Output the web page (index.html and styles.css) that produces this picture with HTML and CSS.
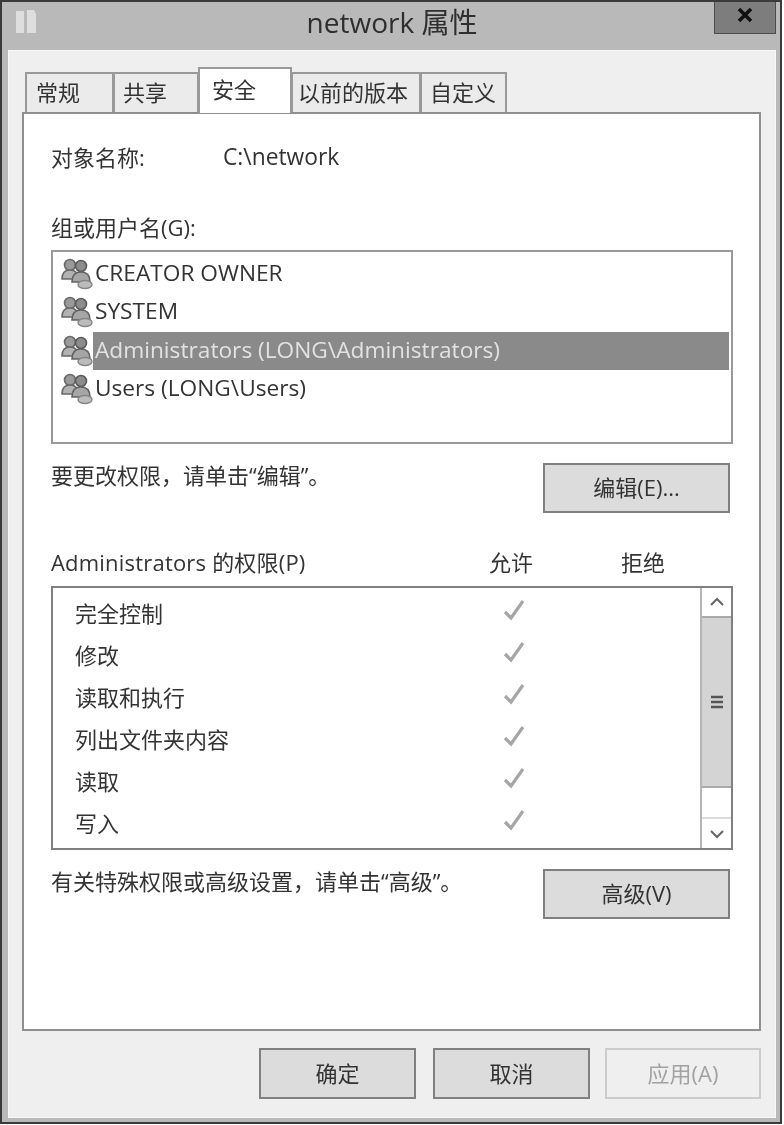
FILE: index.html
```html
<!DOCTYPE html>
<html lang="zh-CN">
<head>
    <meta charset="UTF-8">
    <meta name="viewport" content="width=device-width, initial-scale=1.0">
    <title>network 属性</title>
    <link rel="stylesheet" href="styles.css">
</head>
<body>
    <svg class="defs" width="0" height="0">
        <symbol id="users" viewBox="0 0 32 32">
            <circle cx="9" cy="7" r="5.5" fill="#9a9a9a" stroke="#686868" stroke-width="1.6"/>
            <path d="M1 21c0-6 3-9 8-9s8 3 8 9z" fill="#b2b2b2" stroke="#686868" stroke-width="1.6"/>
            <circle cx="20" cy="8" r="5.5" fill="#8c8c8c" stroke="#5a5a5a" stroke-width="1.6"/>
            <path d="M11 24c0-7 4-10 9-10s9 3 9 10z" fill="#a6a6a6" stroke="#626262" stroke-width="1.6"/>
            <ellipse cx="24" cy="26.5" rx="7" ry="4" fill="#bcbcbc" stroke="#858585" stroke-width="1.4"/>
        </symbol>
        <symbol id="check" viewBox="0 0 24 24">
            <path d="M3 14l6 6L21 3" fill="none" stroke="#a6a6a6" stroke-width="3.2"/>
        </symbol>
    </svg>

    <div class="window">
        <div class="titlebar">
            <svg class="title-icon" width="26" height="28" viewBox="0 0 26 28">
                <path d="M3 3h8v22H3zM14 2h7l2 4v19h-9z" fill="#dedede"/>
            </svg>
            <div class="title">network 属性</div>
            <div class="close">
                <svg width="20" height="16" viewBox="0 0 20 16">
                    <path d="M4 2l12 12M16 2L4 14" stroke="#111" stroke-width="3.6"/>
                </svg>
            </div>
        </div>

        <div class="client">
            <div class="tabs">
                <div class="tab tab-general">常规</div>
                <div class="tab tab-share">共享</div>
                <div class="tab tab-active">安全</div>
                <div class="tab tab-prev">以前的版本</div>
                <div class="tab tab-custom">自定义</div>
            </div>

            <div class="panel">
                <div class="object-row">
                    <span class="object-label">对象名称:</span>
                    <span class="object-path">C:\network</span>
                </div>

                <div class="group-label">组或用户名(G):</div>
                <div class="user-list">
                    <div class="user"><svg class="user-icon"><use href="#users"/></svg><span class="user-name">CREATOR OWNER</span></div>
                    <div class="user"><svg class="user-icon"><use href="#users"/></svg><span class="user-name">SYSTEM</span></div>
                    <div class="user selected"><svg class="user-icon"><use href="#users"/></svg><span class="user-name">Administrators (LONG\Administrators)</span></div>
                    <div class="user"><svg class="user-icon"><use href="#users"/></svg><span class="user-name">Users (LONG\Users)</span></div>
                </div>

                <div class="action-row">
                    <span class="action-text">要更改权限，请单击“编辑”。</span>
                    <div class="btn btn-side">编辑(E)...</div>
                </div>

                <div class="perm-header">
                    <span class="perm-title">Administrators 的权限(P)</span>
                    <span class="perm-allow">允许</span>
                    <span class="perm-deny">拒绝</span>
                </div>
                <div class="perm-list">
                    <div class="perm-rows">
                        <div class="perm"><span class="perm-name">完全控制</span><svg class="check"><use href="#check"/></svg></div>
                        <div class="perm"><span class="perm-name">修改</span><svg class="check"><use href="#check"/></svg></div>
                        <div class="perm"><span class="perm-name">读取和执行</span><svg class="check"><use href="#check"/></svg></div>
                        <div class="perm"><span class="perm-name">列出文件夹内容</span><svg class="check"><use href="#check"/></svg></div>
                        <div class="perm"><span class="perm-name">读取</span><svg class="check"><use href="#check"/></svg></div>
                        <div class="perm"><span class="perm-name">写入</span><svg class="check"><use href="#check"/></svg></div>
                    </div>
                    <div class="scrollbar">
                        <div class="arrow">
                            <svg width="16" height="10" viewBox="0 0 16 10"><path d="M2 8l6-6 6 6" fill="none" stroke="#666" stroke-width="2"/></svg>
                        </div>
                        <div class="thumb">
                            <svg width="14" height="16" viewBox="0 0 14 16"><path d="M1 3h12M1 8h12M1 13h12" stroke="#555" stroke-width="2.6"/></svg>
                        </div>
                        <div class="track"></div>
                        <div class="arrow arrow-down">
                            <svg width="16" height="10" viewBox="0 0 16 10"><path d="M2 2l6 6 6-6" fill="none" stroke="#666" stroke-width="2"/></svg>
                        </div>
                    </div>
                </div>

                <div class="action-row">
                    <span class="action-text">有关特殊权限或高级设置，请单击“高级”。</span>
                    <div class="btn btn-side">高级(V)</div>
                </div>
            </div>

            <div class="footer">
                <div class="btn btn-ok">确定</div>
                <div class="btn btn-footer">取消</div>
                <div class="btn btn-footer btn-disabled">应用(A)</div>
            </div>
        </div>
    </div>
</body>
</html>
```

FILE: styles.css
```css
* {
    box-sizing: border-box;
}
body {
    margin: 0;
    background: #fff;
    font-family: "Open Sans", "Noto Sans CJK SC", sans-serif;
    font-size: 22px;
    color: #333;
}
.defs {
    position: absolute;
}
.window {
    width: 782px;
    height: 1124px;
    background: #b9b9b9;
    border: 2px solid #3a3a3a;
    padding: 0 4px 4px 6px;
    display: flex;
    flex-direction: column;
    filter: blur(0.7px);
}
.titlebar {
    height: 48px;
    display: grid;
    grid-template-columns: 1fr auto 1fr;
    align-items: start;
}
.title-icon {
    margin: 6px 0 0 5px;
}
.title {
    font-size: 28px;
    line-height: 40px;
    color: #2e2e2e;
}
.close {
    justify-self: end;
    width: 62px;
    height: 32px;
    background: #7d7d7d;
    border: 1px solid #4c4c4c;
    border-top: none;
    display: flex;
    justify-content: center;
    padding-top: 5px;
}
.client {
    flex: 1;
    background: #efefef;
    border: 1px solid #f8f8f8;
    padding: 16px 14px 18px 13px;
    display: flex;
    flex-direction: column;
}
.tabs {
    display: flex;
    align-items: flex-end;
    height: 46px;
    margin-bottom: -1px;
    padding-left: 3px;
}
.tab {
    height: 40px;
    margin-bottom: 1px;
    background: #ebebeb;
    border: 2px solid #999;
    border-bottom: none;
    margin-right: -1px;
    padding-bottom: 4px;
    display: flex;
    align-items: center;
}
.tab-general { width: 89px; padding-left: 9px; }
.tab-share { width: 86px; padding-left: 8px; }
.tab-prev { width: 130px; padding-left: 5px; }
.tab-custom { width: 87px; padding-left: 8px; }
.tab-active {
    width: 94px;
    height: 46px;
    margin-bottom: 0;
    padding: 0 0 6px 12px;
    background: #fff;
    position: relative;
    z-index: 1;
}
.panel {
    flex: 1;
    background: #fff;
    border: 2px solid #8f8f8f;
    padding: 29px 26px 0 27px;
}
.object-row {
    height: 30px;
    line-height: 28px;
    display: flex;
}
.object-label {
    width: 172px;
}
.object-path {
    font-size: 22.8px;
}
.group-label {
    height: 30px;
    line-height: 28px;
    margin-top: 40px;
}
.user-list {
    height: 194px;
    margin-top: 7px;
    border: 2px solid #999;
    padding: 3px 2px 0 8px;
}
.user {
    height: 38.3px;
    display: flex;
    align-items: center;
}
.user-icon {
    width: 32px;
    height: 32px;
    flex: none;
}
.user-name {
    flex: 1;
    height: 100%;
    line-height: 35px;
    padding-left: 2px;
    font-size: 22.7px;
    white-space: nowrap;
}
.selected .user-name {
    background: #8a8a8a;
    color: #e2e2e2;
}
.action-row {
    display: flex;
    justify-content: space-between;
    margin-top: 19px;
    padding-right: 3px;
}
.action-text {
    line-height: 25px;
}
.btn {
    height: 51px;
    padding-bottom: 4px;
    background: #dcdcdc;
    border: 2px solid #808080;
    display: flex;
    align-items: center;
    justify-content: center;
}
.btn-side {
    width: 187px;
    height: 50px;
}
.perm-header {
    display: flex;
    height: 30px;
    line-height: 30px;
    margin-top: 34px;
}
.perm-title {
    width: 416px;
    letter-spacing: 0.2px;
    white-space: nowrap;
}
.perm-allow {
    width: 88px;
    text-align: center;
}
.perm-deny {
    width: 88px;
    margin-left: 44px;
    text-align: center;
}
.perm-list {
    height: 264px;
    margin-top: 9px;
    border: 2px solid #808080;
    display: flex;
}
.perm-rows {
    flex: 1;
    padding: 4px 0 0 22px;
}
.perm {
    height: 42px;
    padding-bottom: 2px;
    display: flex;
    align-items: center;
}
.perm-name {
    width: 427px;
}
.check {
    width: 24px;
    height: 24px;
    margin-top: -4px;
}
.scrollbar {
    width: 31px;
    display: flex;
    flex-direction: column;
    border-left: 2px solid #b5b5b5;
}
.arrow {
    height: 28px;
    display: flex;
    align-items: center;
    justify-content: center;
    flex: none;
}
.arrow-down {
    height: 31px;
    border-top: 2px solid #ddd;
}
.thumb {
    height: 172px;
    flex: none;
    background: #d4d4d4;
    border-top: 2px solid #aaa;
    border-bottom: 2px solid #aaa;
    display: flex;
    align-items: center;
    justify-content: center;
}
.track {
    flex: 1;
}
.footer {
    display: flex;
    justify-content: flex-end;
    gap: 15px;
    margin-top: 17px;
}
.btn-ok {
    width: 157px;
    margin-right: 2px;
}
.btn-footer {
    width: 157px;
}
.btn-disabled {
    width: 156px;
    background: #efefef;
    border-color: #ccc;
    color: #a2a2a2;
}
```
